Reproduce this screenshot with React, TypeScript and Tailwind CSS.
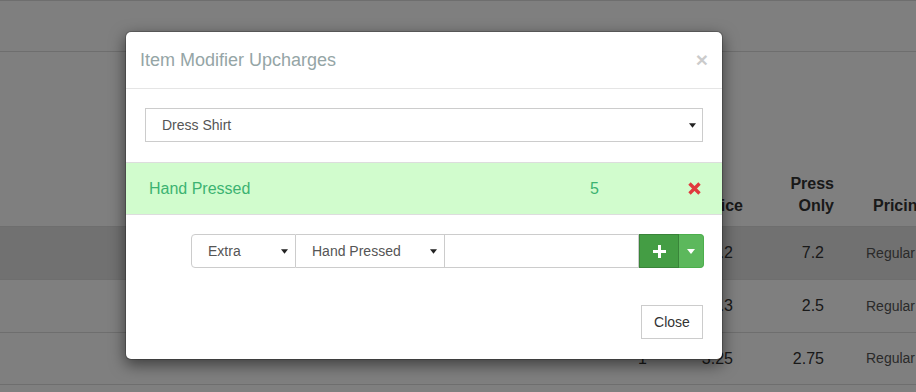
import { useState } from 'react';

interface PriceRow {
  qty: string;
  price: string;
  pressOnly: string;
  pricing: string;
}

const rows: PriceRow[] = [
  { qty: '1', price: '7.2', pressOnly: '7.2', pricing: 'Regular' },
  { qty: '1', price: '3.3', pressOnly: '2.5', pricing: 'Regular' },
  { qty: '1', price: '3.25', pressOnly: '2.75', pricing: 'Regular' },
];

function Caret({ color = '#222', w = 8 }: { color?: string; w?: number }) {
  return (
    <svg width={w} height="5" viewBox="0 0 8 5" className="shrink-0">
      <path d="M0 0h8L4 5z" fill={color} />
    </svg>
  );
}

function SelectBox({ value, className }: { value: string; className: string }) {
  return (
    <div className={`flex h-full items-center justify-between text-[14px] text-[#555] ${className}`}>
      <span>{value}</span>
      <Caret w={7} />
    </div>
  );
}

export default function App() {
  const [item] = useState('Dress Shirt');

  return (
    <div className="relative h-[392px] w-[916px] overflow-hidden bg-white font-['Liberation_Sans',Arial,sans-serif] text-[#333]">
      {/* page behind the dialog */}
      <div className="h-[52px] border-y border-[#ddd]" />
      <div className="grid h-[174px] grid-cols-[569px_88px_86px_91px_1fr] text-[16px] font-bold leading-[22px]">
        <div />
        <div className="flex items-end justify-end pb-[9px]">Qty</div>
        <div className="flex items-end justify-end pb-[9px]">Price</div>
        <div className="flex items-end justify-end pb-[9px] text-right">
          Press
          <br />
          Only
        </div>
        <div className="flex items-end whitespace-nowrap pb-[9px] pl-[39px]">Pricing</div>
      </div>
      {rows.map((r, i) => (
        <div
          key={i}
          className={`grid h-[53px] grid-cols-[569px_88px_86px_91px_1fr] items-center border-t border-[#ddd] text-[16px] ${
            i === 0 ? 'bg-[#e3e3e3]' : ''
          } ${i === rows.length - 1 ? 'border-b' : ''}`}
        >
          <div />
          <div className="pr-[10px] text-right">{r.qty}</div>
          <div className="pr-[10px] text-right">{r.price}</div>
          <div className="pr-[10px] text-right">{r.pressOnly}</div>
          <div className="whitespace-nowrap pl-[32px] text-[14px] text-[#555]">{r.pricing}</div>
        </div>
      ))}

      {/* backdrop */}
      <div className="absolute inset-0 bg-black/50" />

      {/* modal */}
      <div className="absolute left-[125px] top-[31px] w-[598px] rounded-[6px] border border-black/20 bg-white bg-clip-padding shadow-[0_5px_15px_rgba(0,0,0,0.5)]">
        <div className="flex items-start justify-between border-b border-[#e5e5e5] px-[14px] py-[15px]">
          <h4 className="text-[18px] leading-[26px] text-[#95a5a6]">Item Modifier Upcharges</h4>
          <span className="mt-[2px] text-[21px] font-bold leading-none text-black opacity-20">×</span>
        </div>

        <div className="px-[19px] pb-[20px] pt-[19px]">
          <div className="h-[34px] border border-[#ccc]">
            <SelectBox value={item} className="pl-[16px] pr-[6px]" />
          </div>

          <div className="-mx-[19px] mt-[20px] flex h-[53px] items-center border-y border-[#ddd] bg-[#d1fccd] text-[16px] text-[#3cb371]">
            <span className="w-[464px] pl-[23px]">Hand Pressed</span>
            <span className="w-[98px]">5</span>
            <svg width="13" height="13" viewBox="0 0 13 13">
              <path d="M1.5 1.5l10 10M11.5 1.5l-10 10" stroke="#e03a3e" strokeWidth="3.4" />
            </svg>
          </div>

          <div className="-mr-px ml-[46px] mt-[19px] flex h-[34px]">
            <div className="w-[105px] rounded-l-[4px] border border-[#ccc]">
              <SelectBox value="Extra" className="pl-[16px] pr-[7px]" />
            </div>
            <div className="w-[149px] border-y border-r border-[#ccc]">
              <SelectBox value="Hand Pressed" className="pl-[16px] pr-[7px]" />
            </div>
            <input className="w-[194px] border-y border-r border-[#ccc] outline-none" />
            <button className="flex w-[40px] items-center justify-center border border-[#398439] bg-[#449d44]">
              <svg width="13" height="13" viewBox="0 0 13 13">
                <path d="M5 0h3v5h5v3H8v5H5V8H0V5h5z" fill="#fff" />
              </svg>
            </button>
            <button className="flex w-[25px] items-center justify-center rounded-r-[4px] border border-l-0 border-[#4cae4c] bg-[#5cb85c]">
              <Caret color="#fff" />
            </button>
          </div>
        </div>

        <div className="flex justify-end px-[19px] pb-[20px] pt-[17px]">
          <button className="h-[34px] w-[62px] border border-[#ccc] bg-white text-[14px] text-[#333]">Close</button>
        </div>
      </div>
    </div>
  );
}
